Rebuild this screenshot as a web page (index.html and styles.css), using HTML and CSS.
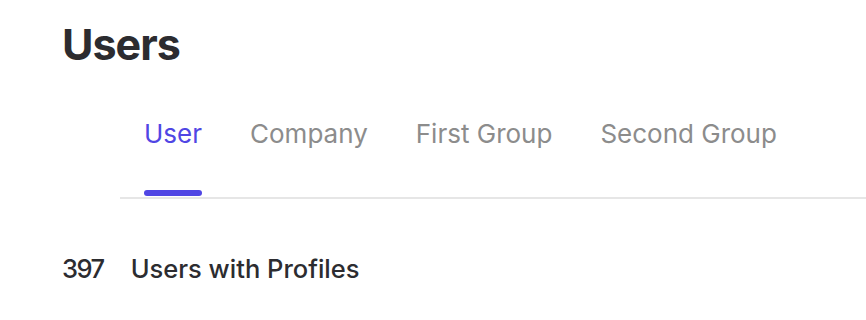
FILE: index.html
```html
<!DOCTYPE html>
<html lang="en">
<head>
    <meta charset="UTF-8">
    <title>Users</title>
    <link rel="stylesheet" href="styles.css">
</head>
<body>
    <div class="page">
        <h1 class="title">Users</h1>
        <div class="tabs">
            <a class="tab active">User</a>
            <a class="tab">Company</a>
            <a class="tab">First Group</a>
            <a class="tab">Second Group</a>
        </div>
        <div class="summary">
            <span class="count">397</span>
            <span class="label">Users with Profiles</span>
        </div>
    </div>
</body>
</html>
```

FILE: styles.css
```css
body{margin:0;background:#fff;font-family:Inter,"Noto Sans",sans-serif;color:#2c2c30}
.page{padding:14px 0 0 62px}
.title{margin:0;font-size:43px;font-weight:700;line-height:60px;letter-spacing:-1px}
.tabs{display:flex;gap:48px;margin:30px 0 0 58px;padding-left:24px;border-bottom:2px solid #e6e6e6}
.tab{font-size:26px;color:#8c8c8c;padding:14px 0 48px;position:relative;cursor:pointer}
.tab.active{color:#5046e4}
.tab.active:after{content:"";position:absolute;left:0;right:0;bottom:1px;height:6px;border-radius:3px;background:#5046e4}
.summary{display:flex;gap:27px;margin-top:54px;font-size:25.5px;font-weight:500}
.count{letter-spacing:-1.5px}
```
